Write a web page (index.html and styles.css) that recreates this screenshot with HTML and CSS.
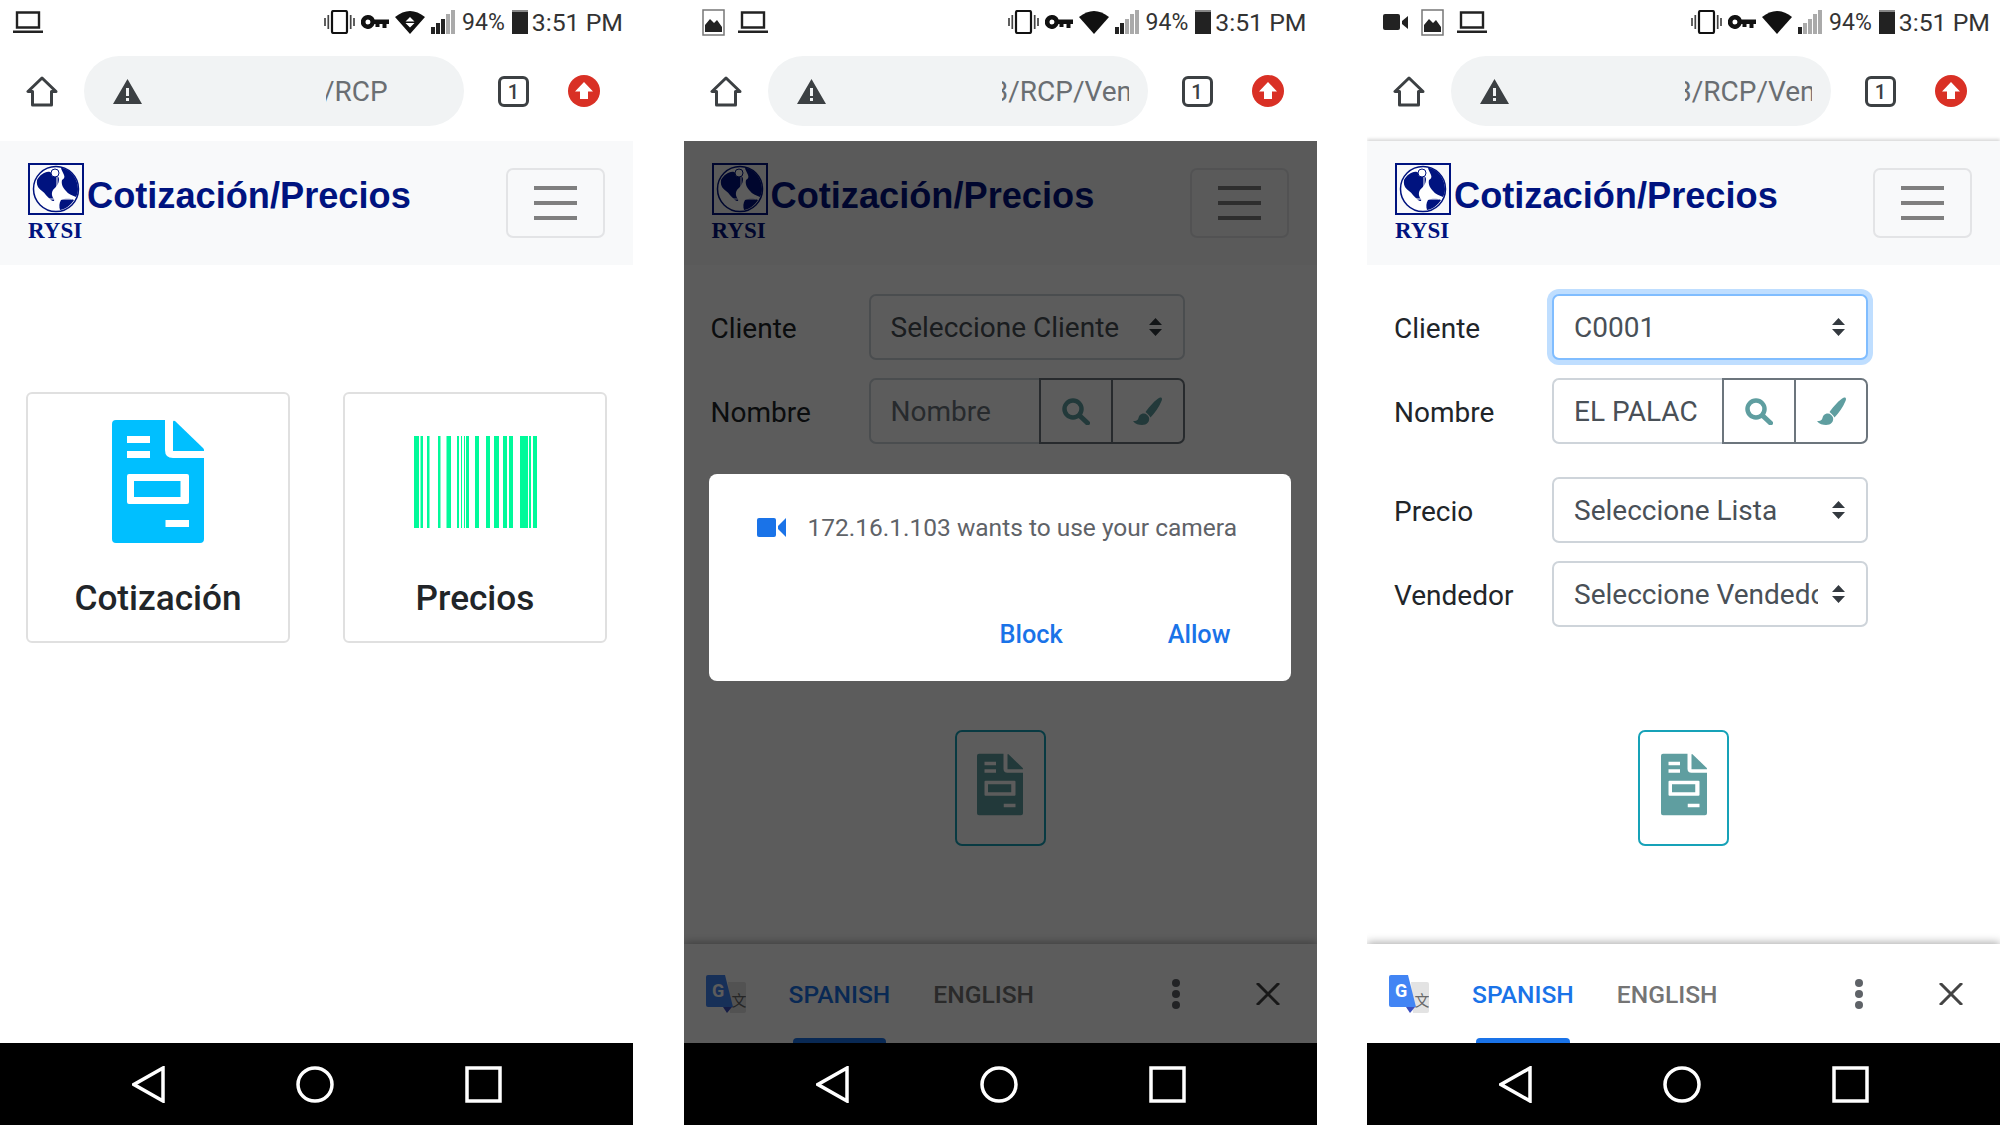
FILE: index.html
```html
<!DOCTYPE html>
<html lang="es">

<head>
  <meta charset="UTF-8">
  <meta name="viewport" content="width=device-width, initial-scale=1.0">
  <title>Cotización/Precios</title>
  <link rel="stylesheet" href="styles.css">
</head>

<body>
  <!-- shared icons -->
  <svg class="defs" aria-hidden="true">
    <symbol id="i-laptop" viewBox="0 0 30 22">
      <path d="M4 1.500h22v15H4z" fill="none" stroke="currentColor" stroke-width="2.400" />
      <path d="M0 19.500h30V22H0z" fill="currentColor" />
    </symbol>
    <symbol id="i-image" viewBox="0 0 23 27">
      <path d="M1 1h21v25H1z" fill="none" stroke="#777" stroke-width="1.500" />
      <path d="M3 23v-7l5-6 4 4 3-3 5 7v5z" fill="currentColor" />
    </symbol>
    <symbol id="i-video" viewBox="0 0 25 20">
      <path d="M2 2h13q2 0 2 2v12q0 2-2 2H2q-2 0-2-2V4q0-2 2-2z" fill="currentColor" />
      <path d="M19 9l6-5v13l-6-5z" fill="currentColor" />
    </symbol>
    <symbol id="i-vibrate" viewBox="0 0 31 24">
      <rect x="8" y="1" width="15" height="22" rx="1.500" fill="none" stroke="currentColor" stroke-width="2.200" />
      <path d="M4.300 5v14M1 8v8M26.700 5v14M30 8v8" stroke="#444" stroke-width="1.700" />
    </symbol>
    <symbol id="i-key" viewBox="0 0 28 14">
      <path fill-rule="evenodd" d="M7 0a7 7 0 0 1 6.600 4.500H28V9h-2.500v4h-4V9h-3v3h-4V9h-1A7 7 0 1 1 7 0zM7 4.500a2.500 2.500 0 1 0 0 5 2.500 2.500 0 0 0 0-5z" fill="currentColor" />
    </symbol>
    <symbol id="i-wifi" viewBox="0 0 30 24">
      <path d="M0 7Q15-5 30 7L15 24z" fill="currentColor" />
    </symbol>
    <symbol id="i-wifi-vpn" viewBox="0 0 30 24">
      <path fill-rule="evenodd" d="M0 7Q15-5 30 7L15 24zM15 7l-4.500 4.500h9zM10.500 13l4.500 4.500 4.500-4.500z" fill="currentColor" />
    </symbol>
    <symbol id="i-home" viewBox="0 0 32 31">
      <path d="M16 2L2 15.500h4.500V29h19V15.500H30z" fill="none" stroke="currentColor" stroke-width="3" stroke-linejoin="round" />
    </symbol>
    <symbol id="i-warn" viewBox="0 0 29 25">
      <path fill-rule="evenodd" d="M14.500 0L29 25H0zM13 9v8h3V9zM13 19v3h3v-3z" fill="currentColor" />
    </symbol>
    <symbol id="i-up" viewBox="0 0 32 32">
      <circle cx="16" cy="16" r="16" fill="#d93025" />
      <path d="M16 7l9 9.500h-5V24h-8v-7.500H7z" fill="#fff" />
    </symbol>
    <symbol id="i-doc" viewBox="0 0 92 123">
      <path fill-rule="evenodd" fill="currentColor" d="M4 0H53V30q0 8 8 8H92V119q0 4-4 4H4q-4 0-4-4V4q0-4 4-4ZM15 16v7H38V16ZM15 31v7H38V31ZM17 54q-2 0-2 2v26q0 2 2 2H75q2 0 2-2V56q0-2-2-2ZM22 61H68.500V77H22ZM53.500 100v7H77v-7Z" />
      <path fill="currentColor" d="M61 2q0-2 2-1L91 28q1 1 1 2v1H61Z" />
    </symbol>
    <symbol id="i-barcode" viewBox="0 0 123 92">
      <path fill="currentColor" d="M0 0h5v92H0zM6.500 0H9v92H6.500zM13 0h2.500v92H13zM24 0h2.500v92H24zM32.500 0H37v92h-4.500zM43 0h2v92h-2zM47 0h1v92h-1zM50 0h1v92h-1zM52 0h3v92h-3zM61 0h4v92h-4zM72 0h4v92h-4zM80 0h5v92h-5zM89 0h4v92h-4zM95 0h4v92h-4zM106 0h8v92h-8zM115 0h2v92h-2zM119 0h4v92h-4z" />
    </symbol>
    <symbol id="i-search" viewBox="0 0 28 27">
      <circle cx="11" cy="11" r="8.500" fill="none" stroke="currentColor" stroke-width="4.500" />
      <path d="M17.500 17.500l8 7.500" fill="none" stroke="currentColor" stroke-width="5" stroke-linecap="round" />
    </symbol>
    <symbol id="i-brush" viewBox="0 0 29 28">
      <path fill="currentColor" d="M27 .5C29 0 29.500 2 28.500 4 26 10 22 16 17.500 20.500 16 18 14.500 16.500 12.500 15 17 9 22 3 27 .5z" />
      <path fill="currentColor" d="M11 16.500C7 16.500 6 19 5.500 21 5 23.500 3 24 0 24c2 3 6 4 9 4 5 0 8-3.500 7-7.500-.8-2-3-4-5-4z" />
    </symbol>
    <symbol id="i-globe" viewBox="0 0 56 52">
      <path d="M1 1h54v50H1z" fill="none" stroke="currentColor" stroke-width="2" />
      <circle cx="28" cy="26" r="22.500" fill="#fff" stroke="currentColor" stroke-width="1.500" />
      <path fill="currentColor" d="M33 4.500C42 6 50 15 50 26c0 3-1 6-2 8-4-2-8-3-10-6-3-3-5-7-4-11 2-1 3-3 2-5-1-3-3-5-3-7.500z" />
      <path fill="currentColor" d="M9 17c3-5 8-9 13-8 4 3 9 3 9 7 0 5-3 8-6 11-2 3-1 7 1 9 1 2-1 3-3 1-4-3-6-7-9-9-2-2-6-4-5-11z" />
      <path fill="currentColor" d="M33 37c5-2 10-1 13 0-3 5-8 9-14 10-1-3-1-7 1-10z" />
      <path fill="none" stroke="#fff" stroke-width="1" d="M29 13v31M14 36h30" />
      <circle cx="27" cy="10" r="4" fill="#fff" stroke="currentColor" stroke-width="1" />
    </symbol>
    <symbol id="i-translate" viewBox="0 0 40 38">
      <path d="M22 7H38q2 0 2 2v27q0 2-2 2H24z" fill="#e3e3e3" />
      <text x="25.500" y="31" class="translate-zh">文</text>
      <path d="M17 32h9l-5 6z" fill="#3b4fc0" />
      <path d="M2 0H19L27 32H2q-2 0-2-2V2q0-2 2-2Z" fill="#4285f4" />
      <text x="6" y="22" class="translate-g">G</text>
    </symbol>
    <symbol id="i-camera" viewBox="0 0 29 19">
      <path d="M2 0h15q2 0 2 2v15q0 2-2 2H2q-2 0-2-2V2q0-2 2-2z" fill="currentColor" />
      <path d="M21 8l8-8v19l-8-8z" fill="currentColor" />
    </symbol>
  </svg>

  <!-- phone 1: menu -->
  <section class="phone">
    <div class="statusbar">
      <div class="status-left first">
        <svg class="s-laptop"><use href="#i-laptop" /></svg>
      </div>
      <div class="status-right">
        <svg class="s-vibrate"><use href="#i-vibrate" /></svg>
        <svg class="s-key"><use href="#i-key" /></svg>
        <svg class="s-wifi"><use href="#i-wifi-vpn" /></svg>
        <div class="signal"><i></i><i></i><i></i><i class="off"></i><i class="off"></i></div>
        <span class="pct">94%</span>
        <div class="battery"></div>
        <span class="clock">3:51 PM</span>
      </div>
    </div>
    <div class="toolbar">
      <svg class="t-home"><use href="#i-home" /></svg>
      <div class="pill">
        <svg class="t-warn"><use href="#i-warn" /></svg>
        <div class="url short"><span>/RCP</span></div>
      </div>
      <div class="tabcount">1</div>
      <svg class="t-up"><use href="#i-up" /></svg>
    </div>
    <div class="viewport">
      <nav class="topnav">
        <div class="brand">
          <div class="logo">
            <svg class="globe"><use href="#i-globe" /></svg>
            <span class="rysi">RYSI</span>
          </div>
          <span class="title">Cotización/Precios</span>
        </div>
        <button type="button" class="burger"><i></i><i></i><i></i></button>
      </nav>
      <main class="page">
        <div class="cards">
          <a class="card">
            <div class="card-icon"><svg class="doc-big"><use href="#i-doc" /></svg></div>
            <h5>Cotización</h5>
          </a>
          <a class="card">
            <div class="card-icon"><svg class="barcode"><use href="#i-barcode" /></svg></div>
            <h5>Precios</h5>
          </a>
        </div>
      </main>
    </div>
    <div class="sysnav">
      <svg class="n-back" viewBox="0 0 33 37"><path d="M31 2v33L2 18.500z" /></svg>
      <svg class="n-home" viewBox="0 0 38 37"><ellipse cx="19" cy="18.500" rx="17" ry="16.500" /></svg>
      <svg class="n-square" viewBox="0 0 37 37"><path d="M2 2h33v33H2z" /></svg>
    </div>
  </section>

  <!-- phone 2: camera permission dialog -->
  <section class="phone">
    <div class="statusbar">
      <div class="status-left second">
        <svg class="s-image"><use href="#i-image" /></svg>
        <svg class="s-laptop"><use href="#i-laptop" /></svg>
      </div>
      <div class="status-right">
        <svg class="s-vibrate"><use href="#i-vibrate" /></svg>
        <svg class="s-key"><use href="#i-key" /></svg>
        <svg class="s-wifi"><use href="#i-wifi" /></svg>
        <div class="signal"><i></i><i></i><i class="off"></i><i class="off"></i><i class="off"></i></div>
        <span class="pct">94%</span>
        <div class="battery"></div>
        <span class="clock">3:51 PM</span>
      </div>
    </div>
    <div class="toolbar">
      <svg class="t-home"><use href="#i-home" /></svg>
      <div class="pill">
        <svg class="t-warn"><use href="#i-warn" /></svg>
        <div class="url"><span>3/RCP/Vent</span></div>
      </div>
      <div class="tabcount">1</div>
      <svg class="t-up"><use href="#i-up" /></svg>
    </div>
    <div class="viewport">
      <nav class="topnav">
        <div class="brand">
          <div class="logo">
            <svg class="globe"><use href="#i-globe" /></svg>
            <span class="rysi">RYSI</span>
          </div>
          <span class="title">Cotización/Precios</span>
        </div>
        <button type="button" class="burger"><i></i><i></i><i></i></button>
      </nav>
      <main class="page">
        <form class="sale-form">
          <div class="row">
            <label>Cliente</label>
            <select class="field"><option>Seleccione Cliente</option></select>
          </div>
          <div class="row">
            <label>Nombre</label>
            <div class="group">
              <input type="text" placeholder="Nombre">
              <button type="button"><svg class="b-search"><use href="#i-search" /></svg></button>
              <button type="button"><svg class="b-brush"><use href="#i-brush" /></svg></button>
            </div>
          </div>
          <div class="row spaced under-dialog"></div>
          <div class="row under-dialog"></div>
        </form>
        <button type="button" class="doc-btn"><svg><use href="#i-doc" /></svg></button>
      </main>
      <div class="translatebar">
        <svg class="tr-logo"><use href="#i-translate" /></svg>
        <div class="tab active">SPANISH</div>
        <div class="tab">ENGLISH</div>
        <div class="dots"><i></i><i></i><i></i></div>
        <svg class="tr-close" viewBox="0 0 24 22"><path d="M1 0l22 22M23 0L1 22" /></svg>
      </div>
      <div class="overlay">
        <div class="dialog">
          <div class="dialog-msg">
            <svg class="d-camera"><use href="#i-camera" /></svg>
            <span>172.16.1.103 wants to use your camera</span>
          </div>
          <div class="dialog-actions">
            <a>Block</a>
            <a>Allow</a>
          </div>
        </div>
      </div>
    </div>
    <div class="sysnav">
      <svg class="n-back" viewBox="0 0 33 37"><path d="M31 2v33L2 18.500z" /></svg>
      <svg class="n-home" viewBox="0 0 38 37"><ellipse cx="19" cy="18.500" rx="17" ry="16.500" /></svg>
      <svg class="n-square" viewBox="0 0 37 37"><path d="M2 2h33v33H2z" /></svg>
    </div>
  </section>

  <!-- phone 3: filled form -->
  <section class="phone">
    <div class="statusbar">
      <div class="status-left third">
        <svg class="s-video"><use href="#i-video" /></svg>
        <svg class="s-image"><use href="#i-image" /></svg>
        <svg class="s-laptop"><use href="#i-laptop" /></svg>
      </div>
      <div class="status-right">
        <svg class="s-vibrate"><use href="#i-vibrate" /></svg>
        <svg class="s-key"><use href="#i-key" /></svg>
        <svg class="s-wifi"><use href="#i-wifi" /></svg>
        <div class="signal"><i></i><i class="off"></i><i class="off"></i><i class="off"></i><i class="off"></i></div>
        <span class="pct">94%</span>
        <div class="battery"></div>
        <span class="clock">3:51 PM</span>
      </div>
    </div>
    <div class="toolbar">
      <svg class="t-home"><use href="#i-home" /></svg>
      <div class="pill">
        <svg class="t-warn"><use href="#i-warn" /></svg>
        <div class="url"><span>3/RCP/Vent</span></div>
      </div>
      <div class="tabcount">1</div>
      <svg class="t-up"><use href="#i-up" /></svg>
    </div>
    <div class="viewport shadowed">
      <nav class="topnav">
        <div class="brand">
          <div class="logo">
            <svg class="globe"><use href="#i-globe" /></svg>
            <span class="rysi">RYSI</span>
          </div>
          <span class="title">Cotización/Precios</span>
        </div>
        <button type="button" class="burger"><i></i><i></i><i></i></button>
      </nav>
      <main class="page">
        <form class="sale-form">
          <div class="row">
            <label>Cliente</label>
            <select class="field focus"><option>C0001</option></select>
          </div>
          <div class="row">
            <label>Nombre</label>
            <div class="group">
              <input type="text" value="EL PALAC">
              <button type="button"><svg class="b-search"><use href="#i-search" /></svg></button>
              <button type="button"><svg class="b-brush"><use href="#i-brush" /></svg></button>
            </div>
          </div>
          <div class="row spaced">
            <label>Precio</label>
            <select class="field"><option>Seleccione Lista</option></select>
          </div>
          <div class="row">
            <label>Vendedor</label>
            <select class="field"><option>Seleccione Vendedor</option></select>
          </div>
        </form>
        <button type="button" class="doc-btn"><svg><use href="#i-doc" /></svg></button>
      </main>
      <div class="translatebar">
        <svg class="tr-logo"><use href="#i-translate" /></svg>
        <div class="tab active">SPANISH</div>
        <div class="tab">ENGLISH</div>
        <div class="dots"><i></i><i></i><i></i></div>
        <svg class="tr-close" viewBox="0 0 24 22"><path d="M1 0l22 22M23 0L1 22" /></svg>
      </div>
    </div>
    <div class="sysnav">
      <svg class="n-back" viewBox="0 0 33 37"><path d="M31 2v33L2 18.500z" /></svg>
      <svg class="n-home" viewBox="0 0 38 37"><ellipse cx="19" cy="18.500" rx="17" ry="16.500" /></svg>
      <svg class="n-square" viewBox="0 0 37 37"><path d="M2 2h33v33H2z" /></svg>
    </div>
  </section>
</body>

</html>
```

FILE: styles.css
```css
* {
  box-sizing: border-box;
}

body {
  margin: 0;
  width: 2000px;
  height: 1125px;
  overflow: hidden;
  background: #fff;
  display: flex;
  justify-content: space-between;
  font-family: Roboto, "Liberation Sans", sans-serif;
  color: #212529;
}

.defs {
  display: none;
}

svg {
  display: block;
  flex: none;
}

.phone {
  width: 633px;
  height: 1125px;
  overflow: hidden;
  display: flex;
  flex-direction: column;
}

/* status bar */
.statusbar {
  height: 44px;
  display: flex;
  align-items: center;
  color: #222;
}

.status-left {
  display: flex;
  align-items: center;
  gap: 13px;
}

.status-left.first {
  padding-left: 13px;
}

.status-left.second {
  padding-left: 18px;
}

.status-left.third {
  padding-left: 16px;
}

.status-right {
  margin-left: auto;
  padding-right: 10px;
  display: flex;
  align-items: center;
  gap: 6px;
  font-size: 24px;
  color: #333;
}

.s-laptop {
  width: 30px;
  height: 22px;
}

.s-image {
  width: 23px;
  height: 27px;
}

.s-video {
  width: 25px;
  height: 20px;
}

.s-vibrate {
  width: 31px;
  height: 24px;
  color: #111;
}

.s-key {
  width: 28px;
  height: 14px;
  color: #111;
}

.s-wifi {
  width: 30px;
  height: 24px;
  color: #111;
}

.signal {
  width: 25px;
  height: 24px;
  display: flex;
  align-items: flex-end;
  gap: 1px;
}

.signal i {
  width: 4px;
  background: #222;
}

.signal i.off {
  background: #aaa;
}

.signal i:nth-child(1) {
  height: 7px;
}

.signal i:nth-child(2) {
  height: 11px;
}

.signal i:nth-child(3) {
  height: 15px;
}

.signal i:nth-child(4) {
  height: 20px;
}

.signal i:nth-child(5) {
  height: 24px;
}

.pct {
  font-size: 23px;
}

.battery {
  width: 16px;
  height: 24px;
  background: #222;
  margin-left: 1px;
  border-top: 2px solid #888;
}

.clock {
  font-size: 24.8px;
  margin-left: -2px;
}

/* browser toolbar */
.toolbar {
  height: 97px;
  padding: 12px 0 0 26px;
  display: flex;
  align-items: flex-start;
  color: #3c4043;
}

.t-home {
  width: 32px;
  height: 31px;
  margin-top: 20px;
}

.pill {
  width: 380px;
  height: 70px;
  margin-left: 26px;
  padding-left: 29px;
  border-radius: 35px;
  background: #f1f3f4;
  display: flex;
  align-items: center;
}

.t-warn {
  width: 29px;
  height: 25px;
}

.url {
  width: 127px;
  margin-left: 176px;
  overflow: hidden;
  white-space: nowrap;
  font-size: 28px;
  color: #6a6e72;
}

.url span {
  display: block;
  margin-left: -9px;
}

.url.short {
  width: 61px;
  margin-left: 184px;
}

.url.short span {
  margin-left: -3px;
}

.tabcount {
  width: 31px;
  height: 31px;
  margin: 20px 0 0 34px;
  border: 3px solid #3c4043;
  border-radius: 6px;
  display: flex;
  align-items: center;
  justify-content: center;
  font-size: 20px;
  font-weight: 500;
}

.t-up {
  width: 32px;
  height: 32px;
  margin: 19px 0 0 39px;
}

/* page area */
.viewport {
  flex: 1;
  min-height: 0;
  position: relative;
  display: flex;
  flex-direction: column;
}

.viewport.shadowed {
  box-shadow: 0 -2px 3px rgba(0, 0, 0, .15);
}

.topnav {
  height: 124px;
  flex: none;
  padding: 22px 28px 0 28px;
  background: #f8f9fa;
  display: flex;
  align-items: flex-start;
  justify-content: space-between;
}

.brand {
  display: flex;
  align-items: flex-start;
  gap: 3px;
}

.logo {
  width: 56px;
  display: flex;
  flex-direction: column;
  color: #00137f;
}

.globe {
  width: 56px;
  height: 52px;
}

.rysi {
  margin-top: 4px;
  font: 700 23px/1 "Liberation Serif", serif;
  color: #00137f;
}

.title {
  margin-top: 15px;
  font: 700 36.2px/1 "Liberation Sans", sans-serif;
  color: #00137f;
}

.burger {
  width: 99px;
  height: 70px;
  margin-top: 5px;
  padding: 0;
  background: none;
  border: 2px solid #e3e4e6;
  border-radius: 7px;
  display: flex;
  flex-direction: column;
  align-items: center;
  justify-content: center;
  gap: 11px;
}

.burger i {
  display: block;
  width: 43px;
  height: 4px;
  background: #7f7f7f;
}

.page {
  flex: 1;
  min-height: 0;
  background: #fff;
}

/* menu cards */
.cards {
  display: flex;
  gap: 53px;
  padding: 127px 0 0 26px;
}

.card {
  width: 264px;
  height: 251px;
  padding-top: 26px;
  border: 2px solid #e0e0e0;
  border-radius: 6px;
  text-align: center;
}

.card-icon {
  height: 123px;
  display: flex;
  align-items: center;
  justify-content: center;
}

.doc-big {
  width: 92px;
  height: 123px;
  color: #00bfff;
}

.barcode {
  width: 123px;
  height: 92px;
  color: #00fa9a;
}

.card h5 {
  margin: 34px 0 0;
  font-size: 35.2px;
  line-height: 42px;
  font-weight: 500;
}

/* form */
.sale-form {
  padding: 29px 0 0 27px;
}

.row {
  height: 66px;
  margin-bottom: 18px;
  display: flex;
  align-items: center;
}

.row.spaced {
  margin-top: 33px;
}

.row.under-dialog {
  visibility: hidden;
}

.row label {
  width: 158px;
  padding-top: 3px;
  font-size: 28px;
}

.field {
  width: 316px;
  height: 66px;
  padding: 0 48px 0 20px;
  appearance: none;
  border: 2px solid #ced4da;
  border-radius: 7px;
  background: #fff url("data:image/svg+xml,%3Csvg xmlns='http://www.w3.org/2000/svg' width='13' height='18'%3E%3Cpath fill='%23343a40' d='M6.500 0L13 7H0zM0 11h13l-6.500 7z'/%3E%3C/svg%3E") no-repeat right 21px center;
  font: 28px Roboto, sans-serif;
  color: #495057;
}

.field.focus {
  border-color: #80bdff;
  box-shadow: 0 0 0 5px #bfdeff;
}

.group {
  width: 316px;
  height: 66px;
  display: flex;
}

.group input {
  width: 170px;
  padding: 0 10px 0 20px;
  border: 2px solid #ced4da;
  border-right: 0;
  border-radius: 7px 0 0 7px;
  background: #fff;
  font: 28px Roboto, sans-serif;
  color: #495057;
}

.group input::placeholder {
  color: #6c757d;
}

.group button {
  width: 74px;
  padding: 0;
  background: none;
  border: 2px solid #6c757d;
  display: flex;
  align-items: center;
  justify-content: center;
  color: #5f9ea0;
}

.group button+button {
  margin-left: -2px;
  border-radius: 0 7px 7px 0;
}

.b-search {
  width: 28px;
  height: 27px;
}

.b-brush {
  width: 29px;
  height: 28px;
}

.doc-btn {
  width: 91px;
  height: 116px;
  margin: 103px 0 0 271px;
  padding: 21px 0 0;
  background: none;
  border: 2px solid #17a2b8;
  border-radius: 7px;
  color: #5f9ea0;
  display: flex;
  align-items: flex-start;
  justify-content: center;
}

.doc-btn svg {
  width: 46px;
  height: 63px;
}

/* translate bar */
.translatebar {
  height: 99px;
  flex: none;
  padding-left: 22px;
  background: #fff;
  box-shadow: 0 -2px 8px rgba(0, 0, 0, .3);
  display: flex;
  align-items: center;
  position: relative;
}

.tr-logo {
  width: 40px;
  height: 38px;
}

.translate-g {
  font: 700 18px Roboto, sans-serif;
  fill: #fff;
}

.translate-zh {
  font: 15px "Noto Sans CJK SC", sans-serif;
  fill: #6a6a6a;
}

.tab {
  align-self: stretch;
  padding-top: 2px;
  display: flex;
  align-items: center;
  position: relative;
  font-size: 24.6px;
  font-weight: 500;
  color: #757575;
  margin-left: 43px;
}

.tab.active {
  color: #1a73e8;
}

.tab.active::after {
  content: "";
  position: absolute;
  left: 4px;
  right: 4px;
  bottom: 0;
  height: 5px;
  border-radius: 4px 4px 0 0;
  background: #1a73e8;
}

.dots {
  margin-left: auto;
  display: flex;
  flex-direction: column;
  gap: 3px;
}

.dots i {
  display: block;
  width: 8px;
  height: 8px;
  border-radius: 50%;
  background: #5f6368;
}

.tr-close {
  width: 24px;
  height: 22px;
  margin: 0 37px 0 76px;
  fill: none;
  stroke: #444;
  stroke-width: 3;
}

/* camera dialog */
.overlay {
  position: absolute;
  inset: 0;
  background: rgba(0, 0, 0, .64);
}

.dialog {
  position: absolute;
  left: 25px;
  top: 333px;
  width: 582px;
  height: 207px;
  padding: 0 60px 32px 48px;
  border-radius: 8px;
  background: #fff;
  display: flex;
  flex-direction: column;
}

.dialog-msg {
  margin-top: 39px;
  display: flex;
  align-items: center;
  gap: 22px;
  font-size: 24.5px;
  color: #5f6368;
  white-space: nowrap;
}

.d-camera {
  width: 29px;
  height: 19px;
  color: #1a73e8;
}

.dialog-actions {
  margin-top: auto;
  display: flex;
  justify-content: flex-end;
  gap: 105px;
  font-size: 25.3px;
  font-weight: 500;
  color: #1a73e8;
}

/* android nav */
.sysnav {
  height: 82px;
  flex: none;
  padding: 23px 0 0 132px;
  background: #000;
  display: flex;
  align-items: flex-start;
  gap: 131px;
  position: relative;
}

.sysnav svg {
  height: 37px;
  fill: none;
  stroke: #fff;
  stroke-width: 3.5;
  stroke-linejoin: miter;
}

.n-back {
  width: 33px;
}

.n-home {
  width: 38px;
}

.n-square {
  width: 37px;
}
```
